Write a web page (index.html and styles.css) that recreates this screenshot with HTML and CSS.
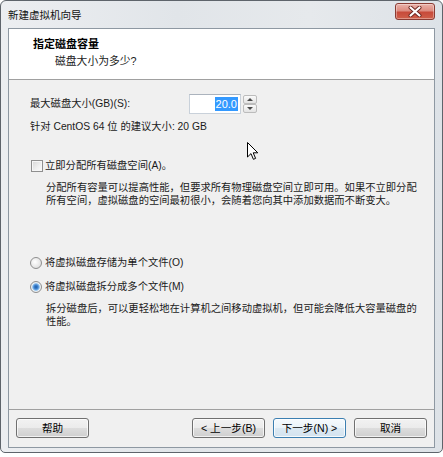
FILE: index.html
```html
<!DOCTYPE html>
<html lang="zh-CN">
<head>
<meta charset="utf-8">
<title>新建虚拟机向导</title>
<link rel="stylesheet" href="styles.css">
</head>
<body>
<div class="window">
  <div class="titlebar">
    <span class="title">新建虚拟机向导</span>
    <div class="close">
      <svg width="14" height="11" viewBox="0 0 14 11">
        <path d="M2.5 1.5 L11.5 9.5 M11.5 1.5 L2.5 9.5" stroke="#6b2620" stroke-width="4" stroke-linecap="round"/>
        <path d="M2.5 1.5 L11.5 9.5 M11.5 1.5 L2.5 9.5" stroke="#ffffff" stroke-width="2.2" stroke-linecap="round"/>
      </svg>
    </div>
  </div>
  <div class="client">
    <div class="header">
      <div class="h-title">指定磁盘容量</div>
      <div class="h-sub">磁盘大小为多少?</div>
    </div>
    <div class="main">
      <div class="size-row">
        <span class="size-label">最大磁盘大小(GB)(S):</span>
        <div class="spin-field"><span class="sel">20.0</span></div>
        <div class="spin-btns">
          <span class="spin-btn"><span class="tri up"></span></span>
          <span class="spin-btn"><span class="tri down"></span></span>
        </div>
      </div>
      <div class="hint">针对 CentOS 64 位 的建议大小: 20 GB</div>
      <div class="check-row"><span class="checkbox"></span>立即分配所有磁盘空间(A)。</div>
      <p class="desc">分配所有容量可以提高性能，但要求所有物理磁盘空间立即可用。如果不立即分配<br>所有空间，虚拟磁盘的空间最初很小，会随着您向其中添加数据而不断变大。</p>
      <div class="radio-row r1"><span class="radio"></span>将虚拟磁盘存储为单个文件(O)</div>
      <div class="radio-row r2"><span class="radio checked"></span>将虚拟磁盘拆分成多个文件(M)</div>
      <p class="desc">拆分磁盘后，可以更轻松地在计算机之间移动虚拟机，但可能会降低大容量磁盘的<br>性能。</p>
    </div>
    <div class="footer">
      <span class="btn help">帮助</span>
      <span class="btn">&lt; 上一步(B)</span>
      <span class="btn default">下一步(N) &gt;</span>
      <span class="btn">取消</span>
    </div>
  </div>
  <svg class="cursor" width="12" height="19" viewBox="0 0 12 19">
    <path d="M0.5 0.5 L0.5 15 L4 11.6 L6.4 17.3 L8.6 16.4 L6.2 10.8 L10.8 10.8 Z" fill="#ffffff" stroke="#000000" stroke-width="1" stroke-linejoin="miter"/>
  </svg>
</div>
</body>
</html>
```

FILE: styles.css
```css
html, body {
  margin: 0;
  padding: 0;
  background: #ffffff;
}

body {
  font-family: "Liberation Sans", "Noto Sans CJK SC", sans-serif;
  font-size: 10.3px;
  color: #1a1a1a;
}

.window {
  position: relative;
  width: 443px;
  height: 453px;
  box-sizing: border-box;
  border: 1px solid #5e646b;
  border-radius: 6px 6px 5px 5px;
  background: linear-gradient(90deg, #eceef1 0%, #e1e5e9 40%, #e6e9ec 70%, #dde2e7 100%);
  padding: 0 7px 4px;
  display: flex;
  flex-direction: column;
}

.titlebar {
  height: 27px;
  display: flex;
  justify-content: space-between;
  align-items: center;
}

.title {
  font-size: 10.5px;
  line-height: 14px;
  color: #111;
  padding-top: 1px;
}

.close {
  align-self: flex-start;
  margin-top: 2px;
  width: 40px;
  height: 17px;
  box-sizing: border-box;
  border: 1px solid #8a3b33;
  border-radius: 3px;
  background: linear-gradient(180deg, #eab2aa 0%, #dd8c80 45%, #c74a3a 55%, #cf5f4a 100%);
  box-shadow: inset 0 0 0 1px rgba(255, 255, 255, 0.35);
  display: flex;
  align-items: center;
  justify-content: center;
}

.close svg {
  display: block;
}

.client {
  flex: 1;
  border: 1px solid #8e98a2;
  background: #f0f0f0;
  display: flex;
  flex-direction: column;
}

.header {
  height: 51px;
  box-sizing: border-box;
  background: #ffffff;
  border-bottom: 1px solid #a0a0a0;
  padding: 8px 0 0 24px;
}

.h-title {
  font-weight: bold;
  font-size: 11px;
  line-height: 14px;
  color: #000;
}

.h-sub {
  margin: 3px 0 0 22px;
  line-height: 14px;
  font-size: 10.8px;
}

.main {
  flex: 1;
  padding: 14px 0 0 21px;
}

.size-row {
  display: flex;
  align-items: center;
  height: 20px;
}

.size-label {
  width: 159px;
  line-height: 14px;
}

.spin-field {
  width: 52px;
  height: 20px;
  box-sizing: border-box;
  border: 1px solid #c9d1da;
  border-top-color: #abb3bd;
  background: #ffffff;
  display: flex;
  align-items: center;
  justify-content: flex-end;
  padding-right: 2px;
}

.sel {
  background: #3399ff;
  color: #ffffff;
  font-size: 11px;
  line-height: 14px;
  padding: 0 1px;
}

.spin-btns {
  margin-left: 2px;
  display: flex;
  flex-direction: column;
  height: 18px;
}

.spin-btn {
  width: 14px;
  height: 9px;
  box-sizing: border-box;
  border: 1px solid #bcbcbc;
  border-radius: 2px;
  background: linear-gradient(180deg, #fafafa, #e3e3e3);
  display: flex;
  align-items: center;
  justify-content: center;
}

.tri {
  width: 0;
  height: 0;
  border-left: 3px solid transparent;
  border-right: 3px solid transparent;
}

.tri.up {
  border-bottom: 3px solid #4a4a4a;
}

.tri.down {
  border-top: 3px solid #4a4a4a;
}

.hint {
  margin-top: 6px;
  line-height: 14px;
}

.check-row {
  margin-top: 25px;
  height: 14px;
  line-height: 14px;
  display: flex;
  align-items: center;
}

.checkbox {
  width: 12px;
  height: 12px;
  box-sizing: border-box;
  margin: 0 2px 0 1px;
  border: 1px solid #8f8f8f;
  background: linear-gradient(135deg, #d6d6d6 0%, #f0f0f0 60%, #fbfbfb 100%);
  box-shadow: inset 0 0 0 1px #f6f6f6;
}

.desc {
  margin: 8px 0 0 16px;
  line-height: 13px;
  white-space: nowrap;
}

.radio-row {
  height: 14px;
  line-height: 14px;
  display: flex;
  align-items: center;
}

.r1 {
  margin-top: 49px;
}

.r2 {
  margin-top: 10px;
}

.radio {
  width: 12px;
  height: 12px;
  box-sizing: border-box;
  margin: 0 3px 0 0;
  border: 1px solid #8f8f8f;
  border-radius: 50%;
  background: radial-gradient(circle at 40% 40%, #ffffff 0%, #e6e6e6 60%, #cfcfcf 100%);
}

.radio.checked {
  background: radial-gradient(circle at 50% 50%, #1d5aa5 0px, #3f84d0 2px, #8fc1ef 3.4px, #eef2f5 4.2px, #d8d8d8 100%);
}

.footer {
  border-top: 1px solid #a0a0a0;
  padding: 8px 7px 9px;
  display: flex;
  gap: 8px;
}

.btn {
  width: 73px;
  height: 20px;
  box-sizing: border-box;
  border: 1px solid #707070;
  border-radius: 3px;
  background: linear-gradient(180deg, #f2f2f2 0%, #ebebeb 50%, #dddddd 50%, #cfcfcf 100%);
  box-shadow: inset 0 0 0 1px rgba(255, 255, 255, 0.7);
  display: flex;
  align-items: center;
  justify-content: center;
  line-height: 14px;
  font-size: 10.6px;
  color: #000;
}

.btn.help {
  margin-right: auto;
}

.btn.default {
  border-color: #3c7fb1;
  background: linear-gradient(180deg, #f6fafd 0%, #eaf3f9 50%, #dce9f3 50%, #d3e3ef 100%);
  box-shadow: inset 0 0 0 1px rgba(255, 255, 255, 0.8);
}

.cursor {
  position: absolute;
  left: 246px;
  top: 141px;
}
```
